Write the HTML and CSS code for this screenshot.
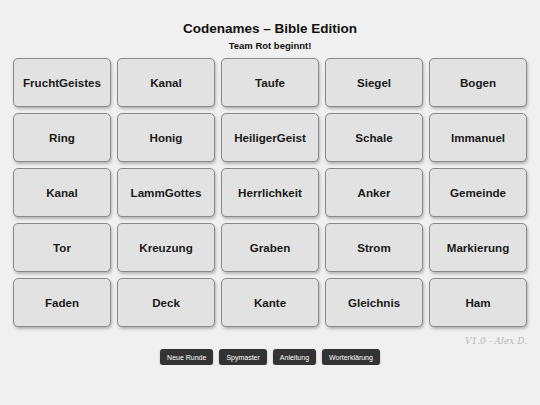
FILE: index.html
```html
<!DOCTYPE html>
<html lang="de">
<head>
<meta charset="utf-8">
<title>Codenames – Bible Edition</title>
<link rel="stylesheet" href="styles.css">
</head>
<body>
<div class="page">
  <h1 class="title">Codenames – Bible Edition</h1>
  <div class="status">Team Rot beginnt!</div>
  <div class="board">
    <div class="card">FruchtGeistes</div>
    <div class="card">Kanal</div>
    <div class="card">Taufe</div>
    <div class="card">Siegel</div>
    <div class="card">Bogen</div>
    <div class="card">Ring</div>
    <div class="card">Honig</div>
    <div class="card">HeiligerGeist</div>
    <div class="card">Schale</div>
    <div class="card">Immanuel</div>
    <div class="card">Kanal</div>
    <div class="card">LammGottes</div>
    <div class="card">Herrlichkeit</div>
    <div class="card">Anker</div>
    <div class="card">Gemeinde</div>
    <div class="card">Tor</div>
    <div class="card">Kreuzung</div>
    <div class="card">Graben</div>
    <div class="card">Strom</div>
    <div class="card">Markierung</div>
    <div class="card">Faden</div>
    <div class="card">Deck</div>
    <div class="card">Kante</div>
    <div class="card">Gleichnis</div>
    <div class="card">Ham</div>
  </div>
  <div class="version">V1.0 - Alex D.</div>
  <div class="controls">
    <button class="btn">Neue Runde</button>
    <button class="btn">Spymaster</button>
    <button class="btn">Anleitung</button>
    <button class="btn">Worterklärung</button>
  </div>
</div>
</body>
</html>
```
FILE: styles.css
```css
html, body {
  margin: 0;
  padding: 0;
  background: #f0f0f0;
}
body {
  font-family: "Liberation Sans", Arial, sans-serif;
  color: #111;
}
.page {
  padding: 20px 13px 0 13px;
}
.title {
  margin: 0;
  font-size: 13.5px;
  font-weight: bold;
  text-align: center;
  line-height: 17px;
}
.status {
  margin-top: 3px;
  font-size: 9.5px;
  font-weight: bold;
  text-align: center;
  line-height: 12px;
}
.board {
  margin-top: 6px;
  display: grid;
  grid-template-columns: repeat(5, 98px);
  grid-auto-rows: 49px;
  column-gap: 6px;
  row-gap: 6px;
}
.card {
  box-sizing: border-box;
  background: #e2e2e2;
  border: 1px solid #8a8a8a;
  border-radius: 5px;
  box-shadow: 1px 2px 3px rgba(0,0,0,0.25);
  display: flex;
  align-items: center;
  justify-content: center;
  font-size: 11.6px;
  font-weight: bold;
  color: #1a1a1a;
}
.version {
  text-align: right;
  margin-top: 8px;
  font-family: "DejaVu Serif", serif;
  font-style: italic;
  font-size: 9px;
  color: #b8b8b8;
  line-height: 12px;
}
.controls {
  margin-top: 2px;
  display: flex;
  justify-content: center;
  gap: 6px;
}
.btn {
  background: #333;
  color: #fff;
  border: none;
  border-radius: 3px;
  font-family: "Liberation Sans", Arial, sans-serif;
  font-size: 7px;
  height: 16px;
  padding: 0 7px;
  box-shadow: 0 1px 2px rgba(0,0,0,0.3);
}
```
